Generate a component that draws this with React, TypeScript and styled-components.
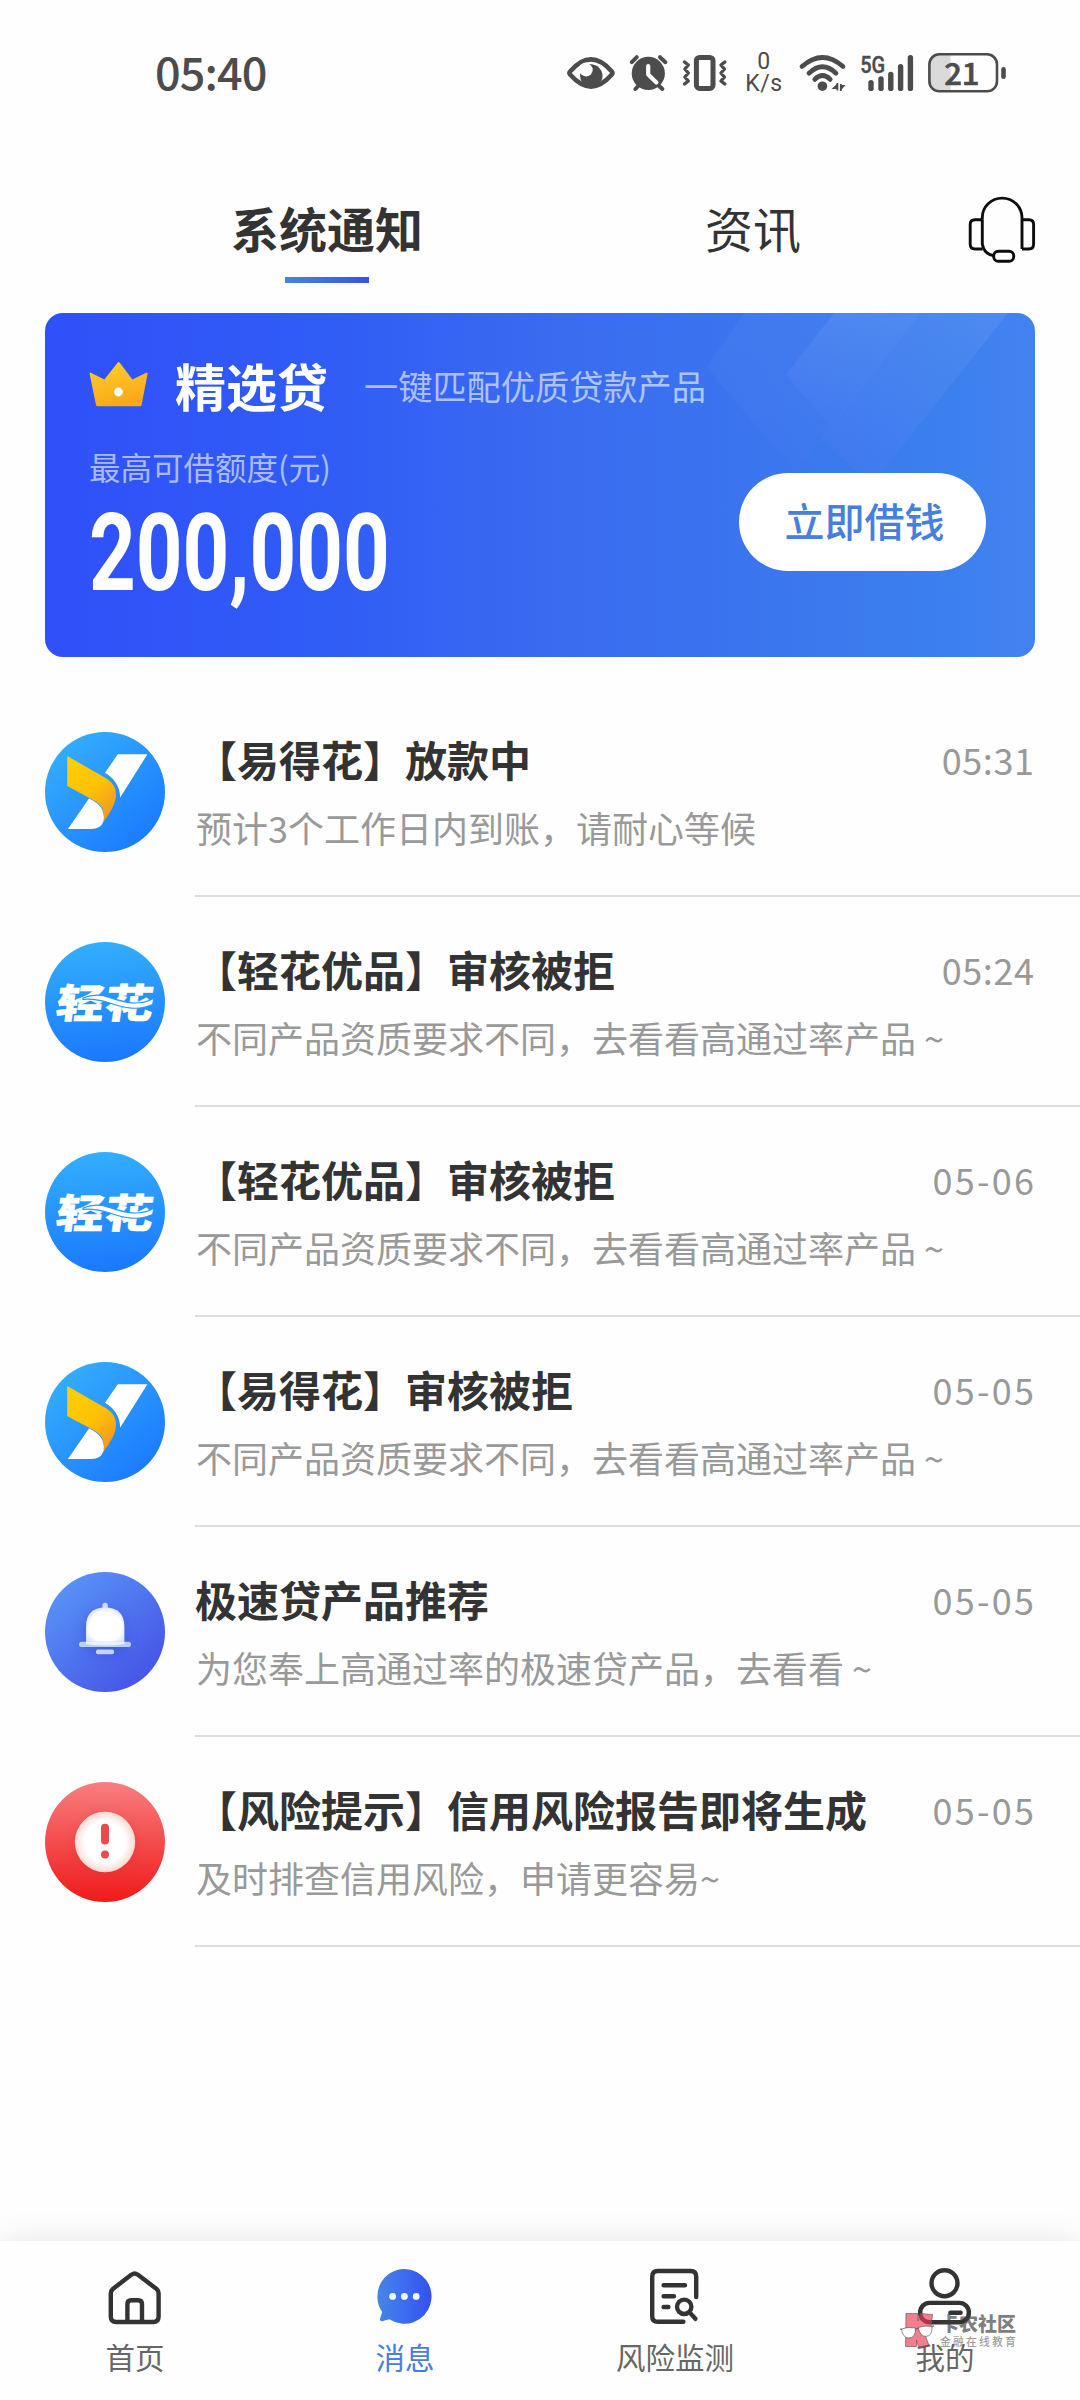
import React from "react";
import styled, { createGlobalStyle } from "styled-components";

const cjk = `"Noto Sans CJK SC", "Noto Sans", sans-serif`;

const GlobalStyle = createGlobalStyle`
  * { box-sizing: border-box; }
  html, body { margin: 0; padding: 0; background: #fefefe; }
  body { font-family: ${cjk}; color: #333; }
  svg { display: block; flex: none; overflow: visible; }
`;

const Page = styled.div`
  position: relative;
  width: 1080px;
  height: 2400px;
  display: flex;
  flex-direction: column;
  background: #fefefe;
  overflow: hidden;
`;

/* ---------- status bar ---------- */

const StatusBar = styled.header`
  height: 146px;
  flex: none;
  display: flex;
  justify-content: space-between;
  align-items: center;
  padding: 0 74px 0 155px;
  color: #4c4c4c;
`;

const Clock = styled.div`
  font-size: 45px;
  font-weight: 500;
  line-height: 60px;
  letter-spacing: -0.9px;
  padding-bottom: 5px;
`;

const StatusIcons = styled.div`
  display: flex;
  align-items: center;
  height: 46px;
`;

const NetSpeed = styled.div`
  width: 40px;
  margin: 0 15px 0 16px;
  display: flex;
  flex-direction: column;
  align-items: center;
  font: 400 23px/22px Roboto, sans-serif;
  letter-spacing: 0.6px;
`;

const NetLine = styled.span`
  display: block;
  height: 22px;
`;

const Glyph = styled.svg<{ $gap?: number }>`
  margin-left: ${(p) => p.$gap ?? 0}px;
`;

/* ---------- tabs ---------- */

const TabBar = styled.nav`
  height: 167px;
  flex: none;
  display: grid;
  grid-template-columns: 426px 426px 114px;
  padding-left: 114px;
`;

const Tab = styled.div<{ $active?: boolean }>`
  display: flex;
  flex-direction: column;
  align-items: center;
  gap: 20px;
  padding-top: 51px;
  font-size: 48px;
  line-height: 60px;
  font-weight: ${(p) => (p.$active ? 700 : 400)};
  color: #333;
`;

const TabLine = styled.span`
  width: 84px;
  height: 6px;
  background: linear-gradient(90deg, #4685dd, #3a52e2);
`;

const Support = styled.div`
  padding-top: 48px;
`;

/* ---------- promo card ---------- */

const Card = styled.section`
  position: relative;
  height: 344px;
  flex: none;
  margin: 0 45px;
  padding: 41px 49px 0 44px;
  border-radius: 18px;
  overflow: hidden;
  display: flex;
  flex-direction: column;
  gap: 30px;
  color: #fff;
  background: linear-gradient(90deg, #3050f9 0%, #305cf6 28%, #3a6af0 50%, #3a77ee 75%, #3c80ee 92%, #4482f1 100%);
`;

const CardShine = styled.svg`
  position: absolute;
  left: 0;
  top: 0;
`;

const CardHead = styled.div`
  display: flex;
  align-items: center;
  height: 60px;
`;

const CardTitle = styled.h2`
  margin: 0 36px 0 26px;
  padding-top: 1px;
  font-size: 51px;
  line-height: 60px;
  font-weight: 700;
`;

const CardHint = styled.span`
  padding-top: 2px;
  font-size: 34.2px;
  line-height: 50px;
  font-weight: 400;
  color: rgba(255, 255, 255, 0.6);
`;

const CardBody = styled.div`
  display: flex;
  justify-content: space-between;
  align-items: flex-start;
`;

const Limit = styled.div`
  display: flex;
  flex-direction: column;
  gap: 20px;
`;

const LimitLabel = styled.span`
  font-size: 31.5px;
  line-height: 44px;
  color: rgba(255, 255, 255, 0.6);
`;

const Amount = styled.strong`
  width: 400px;
  font: 700 108px/90px Roboto, sans-serif;
  transform: scaleX(0.755);
  transform-origin: left center;
`;

const BorrowButton = styled.button`
  width: 247px;
  height: 98px;
  margin-top: 29px;
  padding: 0 0 4px 4px;
  border: 0;
  border-radius: 49px;
  background: #fff;
  color: #4680dc;
  font: 500 40px/60px ${cjk};
`;

/* ---------- messages ---------- */

const List = styled.ul`
  margin: 30px 0 0;
  padding: 0 0 0 45px;
  list-style: none;
`;

const Row = styled.li`
  height: 210px;
  display: flex;
  gap: 30px;
`;

const Avatar = styled.svg`
  width: 120px;
  height: 120px;
  margin-top: 45px;
`;

const RowBody = styled.div`
  flex: 1;
  display: flex;
  flex-direction: column;
  gap: 12px;
  padding: 42px 45px 0 0;
  border-bottom: 2px solid #dedede;
`;

const RowHead = styled.div`
  display: flex;
  justify-content: space-between;
`;

const RowTitle = styled.span`
  font-size: 42px;
  line-height: 60px;
  font-weight: 700;
  color: #333;
`;

const RowTime = styled.time<{ $track: number }>`
  font-size: 36px;
  line-height: 60px;
  color: #999;
  letter-spacing: ${(p) => p.$track}px;
  margin-right: ${(p) => 1 - p.$track}px;
`;

const RowText = styled.span`
  padding-left: 1px;
  font-size: 36px;
  line-height: 52px;
  color: #999;
  white-space: nowrap;
`;

/* ---------- bottom navigation ---------- */

const BottomNav = styled.footer`
  height: 159px;
  flex: none;
  margin-top: auto;
  display: grid;
  grid-template-columns: repeat(4, 1fr);
  padding-top: 26px;
  background: #fefefe;
  box-shadow: 0 0 30px rgba(0, 0, 0, 0.1);
`;

const NavItem = styled.div<{ $active?: boolean }>`
  display: flex;
  flex-direction: column;
  align-items: center;
  gap: 8px;
  font-size: 29.5px;
  line-height: 42px;
  color: ${(p) => (p.$active ? "#4680dc" : "#666")};
`;

const Watermark = styled.div`
  position: absolute;
  left: 900px;
  top: 2312px;
  display: flex;
  gap: 5px;
`;

const WatermarkText = styled.div`
  display: flex;
  flex-direction: column;
  color: rgba(60, 60, 60, 0.68);
  font-weight: 900;
  font-size: 19px;
  line-height: 22px;
`;

const WatermarkSub = styled.span`
  color: rgba(90, 90, 90, 0.6);
  font-weight: 500;
  font-size: 10.8px;
  letter-spacing: 2.2px;
  line-height: 14px;
`;

/* ---------- drawings ---------- */

const ink = "#4c4c4c";

const EyeIcon = () => (
  <Glyph width="47" height="38" viewBox="567.5 54 47 38">
    <path d="M570.6 71.4 C578 63 584 59.4 591.5 59.4 C599 59.4 605 63 612.3 71.4 Q613.6 73 612.3 74.6 C605 83 599 86.6 591.5 86.6 C584 86.6 578 83 570.6 74.6 Q569.3 73 570.6 71.4Z" fill="none" stroke={ink} strokeWidth="4.6" />
    <circle cx="591.8" cy="75.8" r="11.2" fill={ink} />
    <circle cx="586.6" cy="69.4" r="7" fill="#fefefe" />
    <path d="M589 64.6 Q591.6 64 594 64.9 L594 72 L590.8 75Z" fill={ink} />
    <path d="M587 63.4 A6.4 6.4 0 0 1 586.6 76.2 L580 72 L581 65Z" fill="#fefefe" />
  </Glyph>
);

const AlarmIcon = () => (
  <Glyph $gap={15} width="39" height="38" viewBox="630 54 39 38">
    <circle cx="649.3" cy="73.4" r="16.6" fill={ink} />
    <path d="M632.8 62.2 L637.8 57.2 M661 57.2 L666.4 62.2 M641 84 L636.4 89 M658 84 L663.4 89" stroke={ink} strokeWidth="4" strokeLinecap="round" />
    <path d="M649.2 66 V74.4 L657.4 82.4" fill="none" stroke="#fefefe" strokeWidth="4.2" strokeLinecap="round" strokeLinejoin="round" />
  </Glyph>
);

const VibrateIcon = () => (
  <Glyph $gap={14} width="46" height="38" viewBox="683 54 46 38">
    <rect x="697.4" y="57.4" width="16.6" height="31" rx="3.2" fill="none" stroke={ink} strokeWidth="5" />
    <path d="M685.5 62 l3.8 3 l-3.4 4 l3.4 4 l-3.4 4 l3.4 4 l-3.8 3 M725.8 62 l-3.8 3 l3.4 4 l-3.4 4 l3.4 4 l-3.4 4 l3.8 3" fill="none" stroke={ink} strokeWidth="3.4" strokeLinecap="round" strokeLinejoin="round" />
  </Glyph>
);

const WifiIcon = () => (
  <Glyph width="47" height="38" viewBox="799 54 47 38">
    <g fill="none" stroke={ink} strokeWidth="4.8" strokeLinecap="round">
      <path d="M802 66.5 Q822.5 48.5 843 66.5" />
      <path d="M809 73.2 Q822.5 60.5 836 73.2" />
      <path d="M814.8 79.4 Q822.5 71.6 830.2 79.4" />
    </g>
    <circle cx="822.4" cy="86.2" r="4.8" fill={ink} />
    <path d="M837.4 83 V90.6 M840.8 91 V84" stroke={ink} strokeWidth="1.8" />
    <path d="M837.8 83 L831.6 89 H837Z M840.4 91 L845.6 85 H841Z" fill={ink} />
  </Glyph>
);

const SignalIcon = () => (
  <Glyph $gap={14} width="54" height="38" viewBox="860 54 54 38">
    <text x="860.2" y="72.8" fontFamily="Roboto, sans-serif" fontSize="24" fontWeight="500" textLength="25" lengthAdjust="spacingAndGlyphs" fill={ink} stroke={ink} strokeWidth="0.4">5G</text>
    <path d="M871 82.6 V88.4 M881 79 V88.4 M890.8 74.4 V88.4 M900.6 66.6 V88.4 M910.4 57.8 V88.4" stroke={ink} strokeWidth="5.4" strokeLinecap="round" />
  </Glyph>
);

const BatteryIcon = () => (
  <Glyph $gap={14} width="78" height="42" viewBox="928 52 78 42">
    <path d="M939 55 H950.6 V91 H939 Q930 91 930 82 V64 Q930 55 939 55Z" fill="#dadada" />
    <rect x="929.4" y="54.3" width="67.6" height="37" rx="10" fill="none" stroke={ink} strokeWidth="2.6" />
    <rect x="1001.2" y="67" width="4.6" height="12" rx="2.3" fill={ink} />
    <text x="961.8" y="84.6" textAnchor="middle" fontFamily="Noto Sans CJK SC, sans-serif" fontSize="31" fontWeight="500" stroke={ink} strokeWidth="0.7" fill={ink}>21</text>
  </Glyph>
);

const HeadsetIcon = () => (
  <svg width="72" height="72" viewBox="0 0 72 72" fill="none" stroke="#0d0d0d" strokeWidth="2.9" strokeLinejoin="round">
    <path d="M16.3 25.8 V23.5 A19.85 19.4 0 0 1 56 23.5 V55" />
    <path d="M16.3 25.8 V50 Q18 60 27.5 61.6" />
    <path d="M16.3 25.8 H9 Q4.2 25.8 4.2 30.6 V50 Q4.2 55 9 55 H16.6" />
    <path d="M56 25.8 H63 Q67.6 25.8 67.6 30.6 V50 Q67.6 55 63 55 H56" />
    <rect x="27.7" y="57.3" width="20" height="10" rx="4.6" />
  </svg>
);

const CrownIcon = () => (
  <svg width="60" height="46" viewBox="0 0 60 46">
    <defs>
      <linearGradient id="crown" x1="0" y1="0" x2="0.3" y2="1">
        <stop offset="0" stopColor="#ffd02c" />
        <stop offset="1" stopColor="#fba91b" />
      </linearGradient>
    </defs>
    <path d="M0.6 12.8 Q0.2 11.2 1.8 11.8 L15.4 18.4 L28.8 1.4 Q29.8 0.4 30.6 1.4 L43.4 18.4 L57.2 11.8 Q59 11.2 58.6 12.8 L52.6 44 Q52.4 45.2 51 45.2 H8.6 Q7.2 45.2 7 44Z" fill="url(#crown)" />
    <circle cx="29.4" cy="31" r="4.4" fill="#fff" />
  </svg>
);

const Shine = () => (
  <CardShine width="990" height="344" viewBox="0 0 990 344">
    <defs>
      <linearGradient id="beam" x1="0" y1="0" x2="0" y2="1">
        <stop offset="0" stopColor="#fff" stopOpacity="0.07" />
        <stop offset="1" stopColor="#8a7cff" stopOpacity="0.06" />
      </linearGradient>
      <linearGradient id="beamSoft" x1="0" y1="0" x2="0.2" y2="1">
        <stop offset="0" stopColor="#fff" stopOpacity="0.035" />
        <stop offset="1" stopColor="#7a7cff" stopOpacity="0.04" />
      </linearGradient>
    </defs>
    <path d="M699 0 H875 L751 160 L662 54Z" fill="url(#beamSoft)" />
    <path d="M789 0 H875 L786 114 L741 62Z" fill="url(#beam)" />
    <path d="M875 0 H963 L836 160 H812 L776 126Z" fill="url(#beam)" />
  </CardShine>
);

const YideAvatar = ({ id }: { id: string }) => (
  <Avatar viewBox="0 0 120 120">
    <defs>
      <linearGradient id={`${id}-bg`} x1="0.1" y1="0.1" x2="0.8" y2="0.9">
        <stop offset="0" stopColor="#35aefc" />
        <stop offset="1" stopColor="#1c7cff" />
      </linearGradient>
      <linearGradient id={`${id}-fold`} x1="0" y1="0" x2="0.7" y2="1">
        <stop offset="0" stopColor="#ffd000" />
        <stop offset="0.6" stopColor="#fdc106" />
        <stop offset="1" stopColor="#f39a1c" />
      </linearGradient>
    </defs>
    <circle cx="60" cy="60" r="60" fill={`url(#${id}-bg)`} />
    <path d="M72.8 22.3 H102.4 L75.2 65.4 Q74.6 49.5 60 40.8Z" fill="#fff" />
    <path d="M44 66.5 L22.9 97 H46 Q56 97 58.6 89 Q61 74 44 66.5Z" fill="#fff" />
    <path d="M22.2 24 L61.5 46.6 Q73 54 70.6 67 Q69 75.5 59 89 Q60.4 75 50 69 L22.2 54Z" fill={`url(#${id}-fold)`} />
  </Avatar>
);

const QinghuaAvatar = ({ id }: { id: string }) => (
  <Avatar viewBox="0 0 120 120">
    <defs>
      <linearGradient id={`${id}-bg`} x1="0.4" y1="0" x2="0.5" y2="1">
        <stop offset="0" stopColor="#33affd" />
        <stop offset="1" stopColor="#1a78fd" />
      </linearGradient>
    </defs>
    <circle cx="60" cy="60" r="60" fill={`url(#${id}-bg)`} />
    <text transform="translate(9.5 76) skewX(-8) scale(1.03 0.85)" fontFamily="Noto Sans CJK SC, sans-serif" fontSize="47" fontWeight="900" fill="#fff" stroke="#fff" strokeWidth="0.6">轻花</text>
    <path d="M38 56 Q51 50.6 65 55.6 C80 60.6 94 64.4 109 56.2 L107.6 62.6 C94 68.8 80 66.4 64 60.8 Q50 56.4 38 57.4Z" fill="#fff" stroke="#2a98fe" strokeWidth="1.2" />
  </Avatar>
);

const BellAvatar = () => (
  <Avatar viewBox="0 0 120 120">
    <defs>
      <linearGradient id="bell-bg" x1="0.1" y1="0.1" x2="0.8" y2="0.9">
        <stop offset="0" stopColor="#5894f8" />
        <stop offset="1" stopColor="#4656e6" />
      </linearGradient>
      <radialGradient id="bell-body" cx="0.5" cy="0.55" r="0.66">
        <stop offset="0.62" stopColor="#fff" />
        <stop offset="1" stopColor="#c9d7fb" />
      </radialGradient>
      <filter id="bell-shadow" x="-50%" y="-50%" width="200%" height="200%">
        <feGaussianBlur stdDeviation="6" />
      </filter>
    </defs>
    <circle cx="60" cy="60" r="60" fill="url(#bell-bg)" />
    <path d="M39 78 V58 Q39 38 60 38 Q81 38 81 58 V78 Q60 92 39 78Z" fill="#3348d8" opacity="0.4" filter="url(#bell-shadow)" />
    <rect x="57.4" y="30.8" width="5.4" height="10" rx="2.7" fill="#c9d8fb" />
    <path d="M41 71 V55 Q41 35.6 60.2 35.6 Q79.4 35.6 79.4 55 V71Z" fill="url(#bell-body)" />
    <rect x="34" y="69.7" width="52" height="5.4" rx="2.7" fill="#bccdfa" />
    <path d="M41 70 H79.4 V72 Q60 75 41 72Z" fill="#eaf0fe" />
    <rect x="51" y="77.4" width="18" height="4.8" rx="2" fill="#c3d3fb" />
  </Avatar>
);

const AlertAvatar = () => (
  <Avatar viewBox="0 0 120 120">
    <defs>
      <linearGradient id="alert-bg" x1="0" y1="0" x2="0" y2="1">
        <stop offset="0" stopColor="#f87e80" />
        <stop offset="1" stopColor="#f01a1a" />
      </linearGradient>
      <radialGradient id="alert-disc">
        <stop offset="0.68" stopColor="#fff" />
        <stop offset="1" stopColor="#fbd8d0" />
      </radialGradient>
      <filter id="alert-shadow" x="-50%" y="-50%" width="200%" height="200%">
        <feGaussianBlur stdDeviation="4" />
      </filter>
    </defs>
    <circle cx="60" cy="60" r="60" fill="url(#alert-bg)" />
    <circle cx="60" cy="62" r="31" fill="#d83030" opacity="0.35" filter="url(#alert-shadow)" />
    <circle cx="60" cy="60" r="30.2" fill="url(#alert-disc)" />
    <rect x="56" y="41.8" width="8" height="20.6" rx="4" fill="#ea4a4c" />
    <circle cx="60" cy="72.4" r="4" fill="#ea4a4c" />
  </Avatar>
);

const HomeIcon = () => (
  <svg width="60" height="60" viewBox="0 0 60 60" fill="none" stroke="#333" strokeWidth="4.4" strokeLinejoin="round">
    <path d="M26.6 7.6 Q29.6 5.2 32.6 7.6 L51.6 22 Q53.6 23.8 53.6 26.4 V49.6 Q53.6 55 48.2 55 H11.2 Q5.8 55 5.8 49.6 V26.4 Q5.8 23.8 7.8 22Z" />
    <path d="M22.4 55 V37 Q22.4 33.2 26.2 33.2 H33.2 Q37 33.2 37 37 V55" />
  </svg>
);

const MessageIcon = () => (
  <svg width="60" height="60" viewBox="0 0 60 60">
    <defs>
      <linearGradient id="bubble" x1="0" y1="0" x2="1" y2="0">
        <stop offset="0" stopColor="#4685e4" />
        <stop offset="0.5" stopColor="#3d6cf2" />
        <stop offset="1" stopColor="#3350ee" />
      </linearGradient>
    </defs>
    <path d="M29.4 2 A27.2 27.4 0 1 1 14.4 52.3 L7 54.2 Q4.6 54.4 5 51.8 L7.2 45 A27.2 27.4 0 0 1 29.4 2Z" fill="url(#bubble)" />
    <g fill="#eef6ff">
      <circle cx="17.6" cy="29.4" r="3.4" />
      <circle cx="29.4" cy="29.4" r="3.4" />
      <circle cx="41.2" cy="29.4" r="3.4" />
    </g>
  </svg>
);

const ReportIcon = () => (
  <svg width="60" height="60" viewBox="0 0 60 60" fill="none" stroke="#333" strokeWidth="4.4" strokeLinecap="round">
    <path d="M51.2 30 V9.6 Q51.2 4 45.6 4 H12.8 Q7.2 4 7.2 9.6 V49.2 Q7.2 54.8 12.8 54.8 H38.4" />
    <path d="M18.6 18.2 H40 M18.6 29.2 H29 M18.6 40 H23.4" />
    <circle cx="39.2" cy="39.8" r="7.2" />
    <path d="M44.8 45.6 L50.4 51.8" />
  </svg>
);

const UserIcon = () => (
  <svg width="60" height="60" viewBox="0 0 60 60" fill="none" stroke="#333" strokeWidth="4.4" strokeLinecap="round">
    <circle cx="29.5" cy="16.2" r="13" />
    <rect x="5.2" y="35.9" width="48.6" height="19.4" rx="9.4" />
    <path d="M35.4 45.8 H45.6" />
  </svg>
);

const WatermarkLogo = () => (
  <svg width="35" height="36" viewBox="0 0 35 36">
    <path d="M6 1.5 H18 V9 L20 1.5 L32.5 2.5 L31 15 L24 20 L29 33.5 L18.5 35 L16.5 28 V34.5 H5.5Z" fill="rgba(236, 60, 84, 0.66)" stroke="rgba(90,80,80,0.6)" strokeWidth="1" />
    <path d="M1.4 17 Q8 14.4 15.4 16 Q16 26 8.6 26 Q3 26 1.4 17Z M18.4 15.4 Q25 13.4 32 14.4 Q32.6 24 26 24.4 Q19.6 24.4 18.4 15.4Z" fill="#fff" stroke="rgba(80,80,80,0.8)" strokeWidth="0.8" />
    <path d="M0 17 L1.6 17.4 M15.4 17 L18.4 16.4 M32 14.6 L34 13.6" stroke="rgba(80,80,80,0.8)" strokeWidth="1.2" />
  </svg>
);

/* ---------- data ---------- */

const rejected = "不同产品资质要求不同，去看看高通过率产品 ~";

const messages = [
  { avatar: <YideAvatar id="yide1" />, title: "【易得花】放款中", time: "05:31", text: "预计3个工作日内到账，请耐心等候" },
  { avatar: <QinghuaAvatar id="qing1" />, title: "【轻花优品】审核被拒", time: "05:24", text: rejected },
  { avatar: <QinghuaAvatar id="qing2" />, title: "【轻花优品】审核被拒", time: "05-06", text: rejected },
  { avatar: <YideAvatar id="yide2" />, title: "【易得花】审核被拒", time: "05-05", text: rejected },
  { avatar: <BellAvatar />, title: "极速贷产品推荐", time: "05-05", text: "为您奉上高通过率的极速贷产品，去看看 ~" },
  { avatar: <AlertAvatar />, title: "【风险提示】信用风险报告即将生成", time: "05-05", text: "及时排查信用风险，申请更容易~" },
];

const navItems = [
  { label: "首页", icon: <HomeIcon /> },
  { label: "消息", icon: <MessageIcon />, active: true },
  { label: "风险监测", icon: <ReportIcon /> },
  { label: "我的", icon: <UserIcon /> },
];

export default function App() {
  return (
    <>
      <GlobalStyle />
      <Page>
        <StatusBar>
          <Clock>05:40</Clock>
          <StatusIcons>
            <EyeIcon />
            <AlarmIcon />
            <VibrateIcon />
            <NetSpeed>
              <NetLine>0</NetLine>
              <NetLine>K/s</NetLine>
            </NetSpeed>
            <WifiIcon />
            <SignalIcon />
            <BatteryIcon />
          </StatusIcons>
        </StatusBar>

        <TabBar>
          <Tab $active>
            系统通知
            <TabLine />
          </Tab>
          <Tab>资讯</Tab>
          <Support>
            <HeadsetIcon />
          </Support>
        </TabBar>

        <Card>
          <Shine />
          <CardHead>
            <CrownIcon />
            <CardTitle>精选贷</CardTitle>
            <CardHint>一键匹配优质贷款产品</CardHint>
          </CardHead>
          <CardBody>
            <Limit>
              <LimitLabel>最高可借额度(元)</LimitLabel>
              <Amount>200,000</Amount>
            </Limit>
            <BorrowButton>立即借钱</BorrowButton>
          </CardBody>
        </Card>

        <List>
          {messages.map((m, i) => (
            <Row key={i}>
              {m.avatar}
              <RowBody>
                <RowHead>
                  <RowTitle>{m.title}</RowTitle>
                  <RowTime $track={m.time.includes("-") ? 2.3 : 0.6}>{m.time}</RowTime>
                </RowHead>
                <RowText>{m.text}</RowText>
              </RowBody>
            </Row>
          ))}
        </List>

        <BottomNav>
          {navItems.map((n) => (
            <NavItem key={n.label} $active={n.active}>
              {n.icon}
              {n.label}
            </NavItem>
          ))}
        </BottomNav>

        <Watermark>
          <WatermarkLogo />
          <WatermarkText>
            卡农社区
            <WatermarkSub>金融在线教育</WatermarkSub>
          </WatermarkText>
        </Watermark>
      </Page>
    </>
  );
}
